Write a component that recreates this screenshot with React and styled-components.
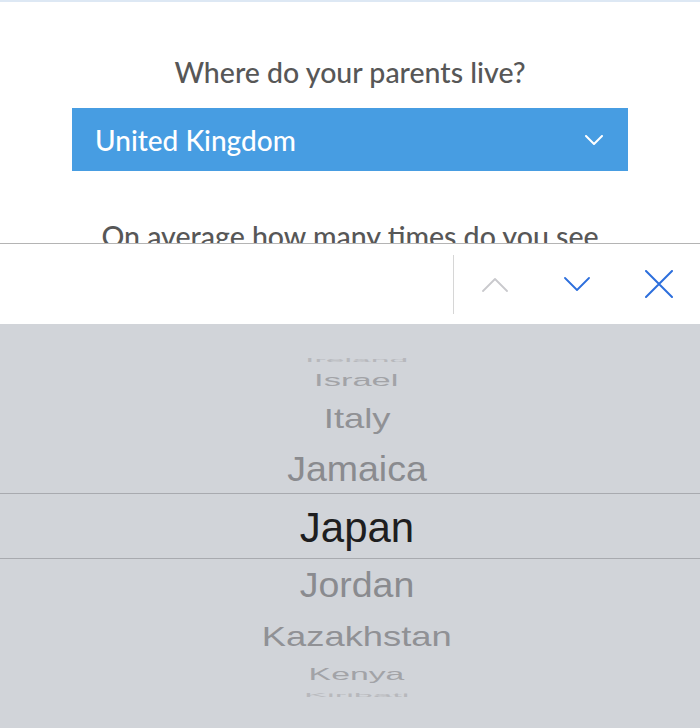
import React from 'react';
import styled, { createGlobalStyle } from 'styled-components';

const GlobalStyle = createGlobalStyle`
  html, body {
    margin: 0;
    padding: 0;
    background: #fff;
  }
  * { box-sizing: border-box; }
`

const Screen = styled.div`
  width: 700px;
  height: 728px;
  overflow: hidden;
  display: flex;
  flex-direction: column;
  background: #fff;
`

const Form = styled.section`
  height: 243px;
  flex: none;
  overflow: hidden;
  border-top: 2px solid #dde8f4;
  display: flex;
  flex-direction: column;
  align-items: center;
  padding: 50px 72px 0;
  & > * { flex: none; }
`

const Question = styled.h2`
  margin: ${p => p.$top || 0}px 0 0;
  font-family: "Lato", "Noto Sans", sans-serif;
  font-weight: 500;
  font-size: 28.5px;
  line-height: 40px;
  color: #575757;
  text-align: center;
  white-space: nowrap;
`

const Select = styled.div`
  margin-top: 16px;
  width: 100%;
  height: 63px;
  background: #479de2;
  display: flex;
  align-items: center;
  justify-content: space-between;
  padding: 0 25px 0 23px;
  color: #fff;
  font-family: "Lato", "Noto Sans", sans-serif;
  font-weight: 500;
  font-size: 28px;
`

const Toolbar = styled.div`
  height: 81px;
  flex: none;
  border-top: 1px solid #b4b4b4;
  background: #fff;
  display: flex;
  justify-content: flex-end;
  align-items: center;
`

const Divider = styled.div`
  width: 1px;
  height: 59px;
  background: #d6d6d6;
`

const ToolButton = styled.button`
  width: 82px;
  height: 60px;
  border: none;
  background: none;
  padding: 0;
  display: flex;
  align-items: center;
  justify-content: center;
  color: ${p => (p.$disabled ? '#c9c9cd' : '#2d6fdc')};
`

const Picker = styled.div`
  flex: 1;
  background: #d1d4d9;
  display: grid;
  place-items: center;
  overflow: hidden;
  font-family: "Liberation Sans", Arial, sans-serif;
`

const Band = styled.div`
  grid-area: 1 / 1;
  width: 100%;
  height: 66px;
  border-top: 1px solid #a8aaaf;
  border-bottom: 1px solid #a8aaaf;
`

const Row = styled.div`
  grid-area: 1 / 1;
  padding-left: 14px;
  font-size: ${p => (p.$selected ? 42 : 37.5)}px;
  line-height: 1;
  white-space: nowrap;
  color: ${p => p.$color};
`

const Chevron = ({ up, size = 26 }) => (
  <svg width={size} height={size / 2 + 2} viewBox="0 0 26 15" fill="none">
    <polyline
      points={up ? '1,14 13,2 25,14' : '1,1 13,13 25,1'}
      stroke="currentColor"
      strokeWidth="1.8"
      strokeLinecap="round"
      strokeLinejoin="round"
    />
  </svg>
)

const CloseIcon = () => (
  <svg width="28" height="28" viewBox="0 0 28 28" fill="none">
    <path d="M1 1 L27 27 M27 1 L1 27" stroke="currentColor" strokeWidth="2" strokeLinecap="round" />
  </svg>
)

const SelectChevron = () => (
  <svg width="18" height="10" viewBox="0 0 18 10" fill="none">
    <polyline points="1,1 9,9 17,1" stroke="#fff" strokeWidth="2" strokeLinecap="round" strokeLinejoin="round" />
  </svg>
)

// wheel radius and a small nudge so the glyphs sit where the reference has them
const R = 170
const NUDGE = 2
const rows = [
  { name: 'Ireland', angle: -80, sx: 0.9, color: '#b7b8bc' },
  { name: 'Israel', angle: -60, sx: 0.92, color: '#a2a3a7' },
  { name: 'Italy', angle: -40, sx: 0.97, color: '#909195' },
  { name: 'Jamaica', angle: -20, sx: 1, color: '#8a8b8f' },
  { name: 'Japan', angle: 0, sx: 1, color: '#1e1e20', selected: true },
  { name: 'Jordan', angle: 20, sx: 1, color: '#8a8b8f' },
  { name: 'Kazakhstan', angle: 40, sx: 0.97, color: '#909195' },
  { name: 'Kenya', angle: 60, sx: 0.9, color: '#a2a3a7' },
  { name: 'Kiribati', angle: 80, sx: 0.92, color: '#b7b8bc' },
]

const wheelTransform = ({ angle, sx }) => {
  const rad = (angle * Math.PI) / 180
  const y = R * Math.sin(rad) + NUDGE
  return `translateY(${y.toFixed(1)}px) scale(${sx}, ${(sx * Math.cos(rad)).toFixed(3)})`
}

const App = () => {
  return (
    <>
      <GlobalStyle />
      <Screen>
        <Form>
          <Question>Where do your parents live?</Question>
          <Select>
            United Kingdom
            <SelectChevron />
          </Select>
          <Question $top={45}>On average how many times do you see</Question>
        </Form>
        <Toolbar>
          <Divider />
          <ToolButton $disabled aria-label="Previous"><Chevron up /></ToolButton>
          <ToolButton aria-label="Next"><Chevron /></ToolButton>
          <ToolButton aria-label="Close"><CloseIcon /></ToolButton>
        </Toolbar>
        <Picker>
          <Band />
          {rows.map(r => (
            <Row key={r.name} $selected={r.selected} $color={r.color} style={{ transform: wheelTransform(r) }}>
              {r.name}
            </Row>
          ))}
        </Picker>
      </Screen>
    </>
  );
}

export default App;
